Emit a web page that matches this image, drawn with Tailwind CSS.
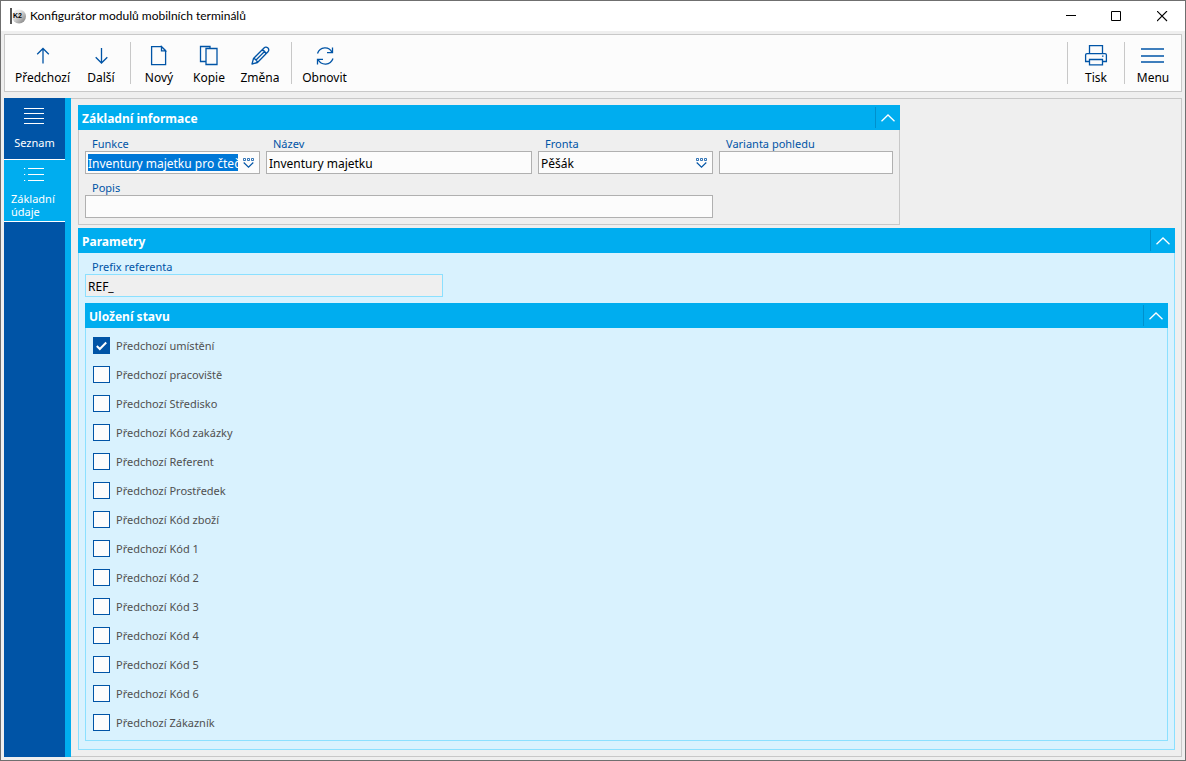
<!DOCTYPE html>
<html lang="cs">
<head>
<meta charset="utf-8">
<meta name="viewport" content="width=device-width, initial-scale=1">
<title>Konfigurátor modulů mobilních terminálů</title>
<script src="https://cdn.jsdelivr.net/npm/@tailwindcss/browser@4"></script>
</head>
<body class="flex min-h-screen flex-col border border-[#6f6f6f] bg-[#efefef] font-['Noto_Sans','Open_Sans',sans-serif] text-[12px] leading-4 text-black">

<svg class="hidden" aria-hidden="true">
  <symbol id="chevron" viewBox="0 0 14 8"><path d="M.5 7.200 7 1l6.500 6.200" fill="none" stroke="#fff" stroke-width="1.300"/></symbol>
  <symbol id="lookup" viewBox="0 0 12 10"><path d="M.5.5h2v2h-2zM4.500.5h2v2h-2zM8.500.5h2v2h-2z" fill="#fff" stroke="#0054a6" stroke-opacity=".8" stroke-width="1"/><path d="M.7 4.500 5.500 9.200l4.800-4.700" fill="none" stroke="#0054a6" stroke-width="1.100"/></symbol>
</svg>

<header class="flex h-[30px] shrink-0 items-center bg-white pl-2">
  <svg class="mr-1 size-[17px]" viewBox="0 0 17 17" aria-hidden="true">
    <defs><linearGradient id="ball" x1="0" y1="0" x2="1" y2="1"><stop offset=".3" stop-color="#ededed"/><stop offset="1" stop-color="#777"/></linearGradient></defs>
    <circle cx="10" cy="8.500" r="7" fill="url(#ball)"/>
    <path d="M1 0h2v16H1z" fill="#555"/>
    <text x="4" y="10" font-family="Liberation Sans" font-weight="700" font-size="7" fill="#000">K2</text>
  </svg>
  <h1 class="grow font-['Lato','Noto_Sans',sans-serif]">Konfigurátor modulů mobilních terminálů</h1>
  <button type="button" aria-label="Minimalizovat" class="grid h-[30px] w-[45px] place-items-center"><svg class="size-[11px]" viewBox="0 0 11 11"><path d="M0 4.500h10" stroke="#000"/></svg></button>
  <button type="button" aria-label="Maximalizovat" class="grid h-[30px] w-[45px] place-items-center"><svg class="size-[11px]" viewBox="0 0 11 11"><path d="M.5.5h9v9h-9z" fill="none" stroke="#000"/></svg></button>
  <button type="button" aria-label="Zavřít" class="grid h-[30px] w-[46px] place-items-center"><svg class="size-[11px]" viewBox="0 0 11 11"><path d="m0 0 10 10m0-10L0 10" stroke="#000" stroke-width="1.100"/></svg></button>
</header>

<nav aria-label="Panel nástrojů" class="mx-[3px] mt-[3px] flex h-[58px] shrink-0 items-center border border-[#c8c8c8] bg-[#fcfcfc]">
  <button type="button" class="flex w-[75px] flex-col items-center gap-0.5 pt-1"><svg class="size-6" viewBox="0.5 0 24 24" fill="none" stroke="#0054a6" stroke-width="1.300"><path d="M12.500 19.500V4.500M6.700 10.300l5.800-5.800 5.800 5.800"/></svg>Předchozí</button>
  <button type="button" class="flex w-[42px] flex-col items-center gap-0.5 pt-1"><svg class="size-6" viewBox="0 0 24 24" fill="none" stroke="#0054a6" stroke-width="1.300"><path d="M12.500 4v15M6.700 13.200l5.800 5.800 5.800-5.800"/></svg>Další</button>
  <span class="mr-[3px] ml-2 h-[42px] w-px bg-[#c8c8c8]"></span>
  <button type="button" class="flex w-[50px] flex-col items-center gap-0.5 pt-1"><svg class="size-6" viewBox="0 0 24 24" fill="none" stroke="#0054a6" stroke-width="1.300"><path d="M4.600 2.600h10l4 4v14h-14zM14.500 2.600v4.200h4.100z"/></svg>Nový</button>
  <button type="button" class="flex w-[50px] flex-col items-center gap-0.5 pt-1"><svg class="size-6" viewBox="0 0 24 24" fill="none" stroke="#0054a6" stroke-width="1.300"><path d="M9 17.500H3.500v-15h9.500V4M9 4.500h11v16H9z"/></svg>Kopie</button>
  <button type="button" class="flex w-[52px] flex-col items-center gap-0.5 pt-1"><svg class="size-6" viewBox="0 0 24 24" fill="none" stroke="#0054a6" stroke-width="1.300" stroke-linejoin="round"><path d="m4 20 1.500-5.500L16 4q1-1 2.200-.8 2.600.5 2.600 2.800 0 .9-.8 1.700L9.500 18.500zM5.500 14.500q3 .5 4 4M14 6q3 .7 4 3.800M7.500 16.500l8.800-8.700"/></svg>Změna</button>
  <span class="mr-0.5 ml-[5px] h-[42px] w-px bg-[#c8c8c8]"></span>
  <button type="button" class="flex w-[61px] flex-col items-center gap-0.5 pt-1"><svg class="size-6" viewBox="0 0 24 24" fill="none" stroke="#0054a6" stroke-width="1.300"><path d="M4.500 9.500C7 2.500 16 2 19 8.500M19.500 3.500v5.200h-5.500M20 14.500c-2.500 7-11.500 7.500-15 1M4.500 20.500v-5.200H10"/></svg>Obnovit</button>
  <span class="ml-auto h-[42px] w-px bg-[#c8c8c8]"></span>
  <button type="button" class="flex w-14 flex-col items-center gap-0.5 pt-1"><svg class="size-6" viewBox="0 0 24 24" fill="none" stroke="#0054a6" stroke-width="1.300"><path d="M5.500 9.500V1.600h13v7.900M5.500 17.500H1.600V11q0-1.400 1.400-1.400h18q1.400 0 1.400 1.400v6.500h-3.900M5.500 15.500h13v5.400h-13zM18 12.200h1.500"/></svg>Tisk</button>
  <span class="h-[42px] w-px bg-[#c8c8c8]"></span>
  <button type="button" class="flex w-14 flex-col items-center gap-0.5 pt-1"><svg class="size-6" viewBox="0 0 24 24" stroke="#0054a6" stroke-width="1.400"><path d="M0 5h23M0 12h23M0 18h23"/></svg>Menu</button>
</nav>

<div class="mx-[3px] mt-1.5 mb-[3px] flex grow">
  <nav aria-label="Sekce" class="flex w-[67px] shrink-0 flex-col border-r-[6px] border-[#00adef] bg-[#0054a6] text-[11px] leading-[13px] text-white">
    <button type="button" class="flex h-[61px] flex-col items-center pt-[9px]"><svg class="mb-[11px] h-[18px] w-[22px]" viewBox="0 0 22 18" stroke="#fff" stroke-width="1.200"><path d="M0 1.500h20M0 6.500h20M0 11.500h20M0 16.500h20"/></svg>Seznam</button>
    <button type="button" aria-current="page" class="flex h-[63px] flex-col items-center border-y border-white bg-[#00adef] pt-2"><svg class="mb-2.5 h-[14px] w-[22px] shrink-0" viewBox="0 0 22 14" stroke="#fff" stroke-width="1.200"><path d="M0 .5h1.200M4 .5h16M0 6.500h1.200M4 6.500h16M0 12.500h1.200M4 12.500h16"/></svg><span class="w-full pl-[7px] text-left">Základní údaje</span></button>
  </nav>

  <main class="flex grow flex-col gap-[3px] border border-l-0 border-[#c8c8c8] py-1.5 pr-1.5 pl-[7px]">
    <section class="w-[822px] max-w-full">
      <div class="flex h-[25px] items-center bg-[#00adef] pl-1"><h2 class="grow pt-0.5 text-[12px] font-bold text-white">Základní informace</h2>
        <button type="button" aria-label="Sbalit Základní informace" class="grid h-[21px] w-[25px] place-items-center border-l border-[#0090cc] pr-px"><svg class="h-2 w-3.5"><use href="#chevron"/></svg></button></div>
      <form class="grid grid-cols-[175fr_266fr_175fr_174fr] gap-x-1.5 border border-t-0 border-[#c8c8c8] px-1.5 pb-1.5">
        <div class="min-w-0">
          <label for="funkce" class="block h-[21px] pt-1.5 pl-[7px] text-[11px] leading-4 text-[#0054a6]">Funkce</label>
          <div class="flex h-[23px] items-center border border-[#b0b0b0] bg-[#fcfcfc] pl-0.5">
            <input id="funkce" value="Inventury majetku pro čtečky" class="h-[17px] w-0 min-w-0 grow bg-[#0078d7] pt-px text-white outline-none">
            <button type="button" aria-label="Vybrat funkci" class="grid h-5 w-[21px] place-items-center"><svg class="h-2.5 w-3"><use href="#lookup"/></svg></button>
          </div>
        </div>
        <div class="min-w-0">
          <label for="nazev" class="block h-[21px] pt-1.5 pl-[7px] text-[11px] leading-4 text-[#0054a6]">Název</label>
          <input id="nazev" value="Inventury majetku" class="block h-[23px] w-full border border-[#b0b0b0] bg-[#fcfcfc] px-0.5 pt-0.5 outline-none">
        </div>
        <div class="min-w-0">
          <label for="fronta" class="block h-[21px] pt-1.5 pl-[7px] text-[11px] leading-4 text-[#0054a6]">Fronta</label>
          <div class="flex h-[23px] items-center border border-[#b0b0b0] bg-[#fcfcfc] pl-0.5">
            <input id="fronta" value="Pěšák" class="h-[17px] w-0 min-w-0 grow bg-transparent pt-px outline-none">
            <button type="button" aria-label="Vybrat frontu" class="grid h-5 w-[21px] place-items-center"><svg class="h-2.5 w-3"><use href="#lookup"/></svg></button>
          </div>
        </div>
        <div class="min-w-0">
          <label for="varianta" class="block h-[21px] pt-1.5 pl-[7px] text-[11px] leading-4 text-[#0054a6]">Varianta pohledu</label>
          <input id="varianta" class="block h-[23px] w-full border border-[#b0b0b0] bg-[#fcfcfc] px-0.5 outline-none">
        </div>
        <div class="col-span-3">
          <label for="popis" class="block h-[21px] pt-1.5 pl-[7px] text-[11px] leading-4 text-[#0054a6]">Popis</label>
          <input id="popis" class="block h-[23px] w-full border border-[#b0b0b0] bg-[#fcfcfc] px-0.5 outline-none">
        </div>
      </form>
    </section>

    <section class="flex grow flex-col">
      <div class="flex h-[25px] items-center bg-[#00adef] pl-1"><h2 class="grow pt-0.5 text-[12px] font-bold text-white">Parametry</h2>
        <button type="button" aria-label="Sbalit Parametry" class="grid h-[21px] w-[25px] place-items-center border-l border-[#0090cc] pr-px"><svg class="h-2 w-3.5"><use href="#chevron"/></svg></button></div>
      <div class="flex grow flex-col border border-t-0 border-[#8be0ff] bg-[#d9f2fe] px-1.5 pb-2">
        <label for="prefix" class="block h-[21px] pt-1.5 pl-[7px] text-[11px] leading-4 text-[#0054a6]">Prefix referenta</label>
        <input id="prefix" value="REF_" readonly class="block h-[23px] w-[358px] max-w-full border border-[#8be0ff] bg-[#efefef] px-0.5 pt-0.5 outline-none">

        <fieldset class="mt-1.5 flex grow flex-col" aria-labelledby="ulozeni">
          <div class="flex h-[25px] items-center bg-[#00adef] pl-1"><h3 id="ulozeni" class="grow pt-0.5 text-[12px] font-bold text-white">Uložení stavu</h3>
            <button type="button" aria-label="Sbalit Uložení stavu" class="grid h-[21px] w-[25px] place-items-center border-l border-[#0090cc] pr-px"><svg class="h-2 w-3.5"><use href="#chevron"/></svg></button></div>
          <ul class="grow border border-t-0 border-[#8be0ff] px-[7px] py-[3px] text-[11px] text-[#505050]">
            <li><label class="flex h-[29px] w-fit items-center gap-1.5"><span class="grid"><input type="checkbox" checked class="peer col-start-1 row-start-1 size-[17px] appearance-none border border-[#0054a6] bg-[#fcfcfc] checked:bg-[#0054a6]"><svg class="pointer-events-none invisible col-start-1 row-start-1 size-[17px] peer-checked:visible" viewBox="0 0 17 17"><path d="m3.800 9 3 3 6.400-6.500" fill="none" stroke="#fff" stroke-width="2"/></svg></span>Předchozí umístění</label></li>
            <li><label class="flex h-[29px] w-fit items-center gap-1.5"><input type="checkbox" class="size-[17px] appearance-none border border-[#0054a6] bg-[#fcfcfc] checked:bg-[#0054a6]">Předchozí pracoviště</label></li>
            <li><label class="flex h-[29px] w-fit items-center gap-1.5"><input type="checkbox" class="size-[17px] appearance-none border border-[#0054a6] bg-[#fcfcfc] checked:bg-[#0054a6]">Předchozí Středisko</label></li>
            <li><label class="flex h-[29px] w-fit items-center gap-1.5"><input type="checkbox" class="size-[17px] appearance-none border border-[#0054a6] bg-[#fcfcfc] checked:bg-[#0054a6]">Předchozí Kód zakázky</label></li>
            <li><label class="flex h-[29px] w-fit items-center gap-1.5"><input type="checkbox" class="size-[17px] appearance-none border border-[#0054a6] bg-[#fcfcfc] checked:bg-[#0054a6]">Předchozí Referent</label></li>
            <li><label class="flex h-[29px] w-fit items-center gap-1.5"><input type="checkbox" class="size-[17px] appearance-none border border-[#0054a6] bg-[#fcfcfc] checked:bg-[#0054a6]">Předchozí Prostředek</label></li>
            <li><label class="flex h-[29px] w-fit items-center gap-1.5"><input type="checkbox" class="size-[17px] appearance-none border border-[#0054a6] bg-[#fcfcfc] checked:bg-[#0054a6]">Předchozí Kód zboží</label></li>
            <li><label class="flex h-[29px] w-fit items-center gap-1.5"><input type="checkbox" class="size-[17px] appearance-none border border-[#0054a6] bg-[#fcfcfc] checked:bg-[#0054a6]">Předchozí Kód 1</label></li>
            <li><label class="flex h-[29px] w-fit items-center gap-1.5"><input type="checkbox" class="size-[17px] appearance-none border border-[#0054a6] bg-[#fcfcfc] checked:bg-[#0054a6]">Předchozí Kód 2</label></li>
            <li><label class="flex h-[29px] w-fit items-center gap-1.5"><input type="checkbox" class="size-[17px] appearance-none border border-[#0054a6] bg-[#fcfcfc] checked:bg-[#0054a6]">Předchozí Kód 3</label></li>
            <li><label class="flex h-[29px] w-fit items-center gap-1.5"><input type="checkbox" class="size-[17px] appearance-none border border-[#0054a6] bg-[#fcfcfc] checked:bg-[#0054a6]">Předchozí Kód 4</label></li>
            <li><label class="flex h-[29px] w-fit items-center gap-1.5"><input type="checkbox" class="size-[17px] appearance-none border border-[#0054a6] bg-[#fcfcfc] checked:bg-[#0054a6]">Předchozí Kód 5</label></li>
            <li><label class="flex h-[29px] w-fit items-center gap-1.5"><input type="checkbox" class="size-[17px] appearance-none border border-[#0054a6] bg-[#fcfcfc] checked:bg-[#0054a6]">Předchozí Kód 6</label></li>
            <li><label class="flex h-[29px] w-fit items-center gap-1.5"><input type="checkbox" class="size-[17px] appearance-none border border-[#0054a6] bg-[#fcfcfc] checked:bg-[#0054a6]">Předchozí Zákazník</label></li>
          </ul>
        </fieldset>
      </div>
    </section>
  </main>
</div>
</body>
</html>
